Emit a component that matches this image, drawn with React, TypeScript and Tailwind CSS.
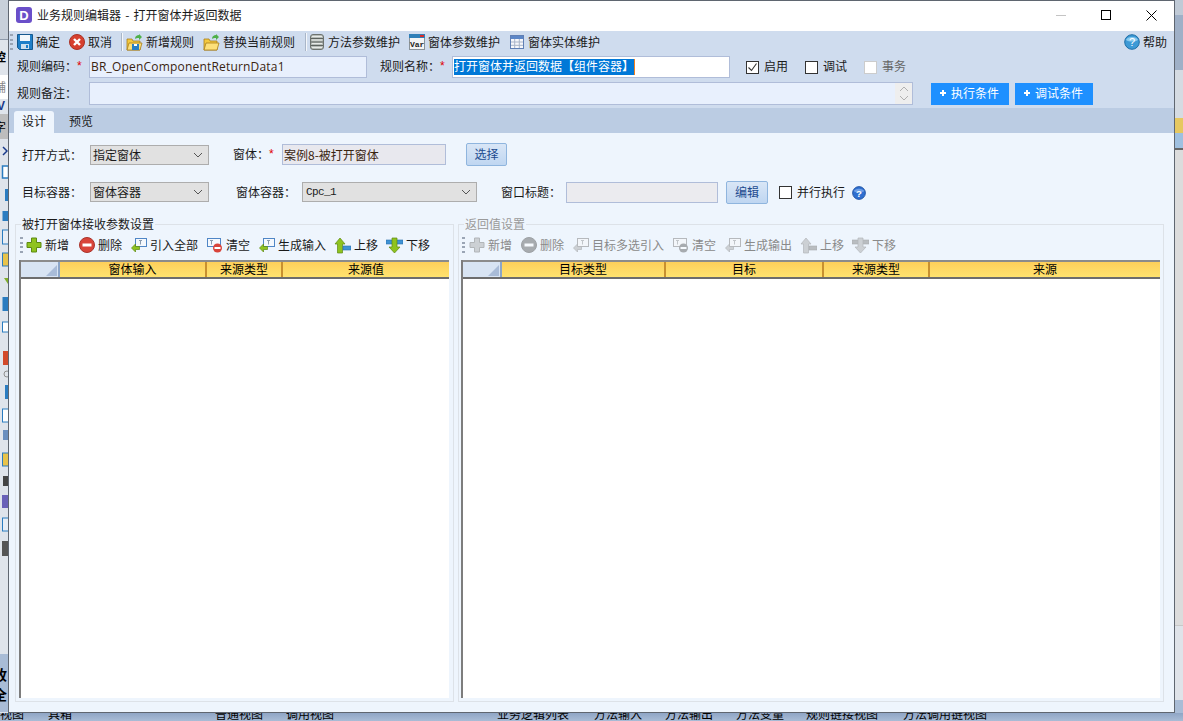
import type { ReactNode } from 'react';

const FONT = 'font-["Noto_Sans_CJK_SC","Liberation_Sans",sans-serif]';

type IconProps = { className?: string };

function SaveIcon() {
  return (
    <svg width="16" height="16" viewBox="0 0 16 16">
      <path d="M0.5 0.5h15v15h-13l-2-2z" fill="#1f7fc8" stroke="#15598f" />
      <rect x="3" y="1" width="10" height="6" fill="#f2f7fb" />
      <rect x="4" y="10" width="8" height="5" fill="#cfe0ee" />
      <rect x="9" y="11" width="2" height="3" fill="#1f7fc8" />
    </svg>
  );
}

function CancelIcon() {
  return (
    <svg width="16" height="16" viewBox="0 0 16 16">
      <circle cx="8" cy="8" r="7.5" fill="#d6402f" stroke="#a93226" />
      <path d="M5 5l6 6M11 5l-6 6" stroke="#fff" strokeWidth="2.4" />
    </svg>
  );
}

function FolderIcon({ blue }: { blue?: boolean }) {
  return (
    <svg width="17" height="17" viewBox="0 0 17 17">
      <path d="M1 5h5l1 2h7v9H1z" fill="#f4c93f" stroke="#a87f1a" strokeWidth="0.8" />
      <path d="M1 16l2-7h13l-2 7z" fill="#fde07a" stroke="#a87f1a" strokeWidth="0.8" />
      <path d="M9 5c0-3 2-4 4-4v-1l3 3-3 3v-2c-2 0-3 0-4 1z" fill="#4fb04a" />
      {blue && <rect x="6" y="10" width="7" height="6" fill="#2a7fc4" />}
      {blue && <rect x="8" y="10" width="3" height="2" fill="#fff" />}
    </svg>
  );
}

function DbIcon() {
  return (
    <svg width="14" height="16" viewBox="0 0 14 16">
      <rect x="0.5" y="0.5" width="13" height="15" rx="2.5" fill="#b6bcb8" stroke="#6d736f" />
      <path d="M1 4.5h12M1 8h12M1 11.5h12" stroke="#5d635f" />
      <path d="M2 2.5h10M2 6h10M2 9.5h10M2 13.5h10" stroke="#e8ebe8" />
    </svg>
  );
}

function VarIcon() {
  return (
    <svg width="16" height="16" viewBox="0 0 16 16">
      <rect x="0.5" y="0.5" width="15" height="15" fill="#f3f4f4" stroke="#8a939a" />
      <rect x="0" y="0" width="16" height="4" fill="#2f7fb8" />
      <rect x="11" y="1" width="4" height="2" fill="#d92a2a" />
      <text x="1" y="13" fontSize="8" fontFamily="Liberation Mono, monospace" fontWeight="700" fill="#222">Var</text>
    </svg>
  );
}

function TableIcon() {
  return (
    <svg width="14" height="14" viewBox="0 0 14 14">
      <rect x="0.5" y="0.5" width="13" height="13" fill="#f6f7fb" stroke="#5f7fb5" />
      <rect x="1" y="1" width="12" height="3" fill="#5b86c7" />
      <path d="M1 7h12M1 10.3h12M4.7 4v9M9.3 4v9" stroke="#a9b4c9" />
    </svg>
  );
}

function HelpIcon({ size = 16, dark }: { size?: number; dark?: boolean }) {
  return (
    <svg width={size} height={size} viewBox="0 0 16 16">
      <circle cx="8" cy="8" r="7.3" fill={dark ? '#2f6fd0' : '#3d9ad6'} stroke={dark ? '#1c4fa0' : '#1e6ea6'} />
      <path d="M2 6c1-4 11-4 12 0-3 2-9 2-12 0z" fill={dark ? '#6f9fe6' : '#8ccbef'} />
      <text x="8" y="12" textAnchor="middle" fontSize="11" fontFamily="Liberation Sans, sans-serif" fontWeight={dark ? 700 : 400} fill="#fff">?</text>
    </svg>
  );
}

function PlusIcon({ className }: IconProps) {
  return (
    <svg className={className} width="16" height="16" viewBox="0 0 16 16">
      <path d="M5.5 1h5v4.500H15v5h-4.500V15h-5v-4.500H1v-5h4.500z" fill="#8fc31f" stroke="#5d8a12" />
    </svg>
  );
}

function MinusIcon({ className }: IconProps) {
  return (
    <svg className={className} width="16" height="16" viewBox="0 0 16 16">
      <circle cx="8" cy="8" r="7.5" fill="#d9443a" stroke="#a9342c" />
      <rect x="3.500" y="6.500" width="9" height="3" fill="#fff" />
    </svg>
  );
}

function ImportIcon({ className }: IconProps) {
  return (
    <svg className={className} width="16" height="16" viewBox="0 0 16 16">
      <rect x="4.500" y="1.500" width="11" height="8" fill="#f4f8fd" stroke="#4f86c6" />
      <path d="M8 3.500h3M9.500 3.500v4" stroke="#8a9aad" />
      <path d="M0.500 11l4-4v2.500h4v3h-4V15z" fill="#8fc31f" stroke="#5d8a12" strokeWidth="0.7" />
    </svg>
  );
}

function ClearIcon({ className }: IconProps) {
  return (
    <svg className={className} width="16" height="16" viewBox="0 0 16 16">
      <rect x="0.500" y="1.500" width="13" height="8" fill="#f4f8fd" stroke="#4f86c6" />
      <path d="M3 3.500h3M4.500 3.500v4" stroke="#8a9aad" />
      <circle cx="10.500" cy="11" r="4.500" fill="#d9443a" />
      <rect x="7.500" y="10" width="6" height="2" fill="#fff" />
    </svg>
  );
}

function UpIcon({ className }: IconProps) {
  return (
    <svg className={className} width="17" height="17" viewBox="0 0 17 17">
      <path d="M5 1l5 6H7.500v9h-5V7H0z" transform="translate(1 0)" fill="#8fc31f" stroke="#5d8a12" strokeWidth="0.7" />
      <rect x="9" y="9" width="8" height="4" fill="#3f93d6" stroke="#2a6ea8" strokeWidth="0.6" />
    </svg>
  );
}

function DownIcon({ className }: IconProps) {
  return (
    <svg className={className} width="17" height="17" viewBox="0 0 17 17">
      <rect x="0" y="3" width="17" height="4" fill="#3f93d6" stroke="#2a6ea8" strokeWidth="0.6" />
      <path d="M6 1h5v9h3l-5.500 6L3 10h3z" fill="#8fc31f" stroke="#5d8a12" strokeWidth="0.7" />
    </svg>
  );
}

function Chevron({ className }: IconProps) {
  return (
    <svg className={className} width="10" height="6" viewBox="0 0 10 6">
      <path d="M1 1l4 4 4-4" fill="none" stroke="#555" />
    </svg>
  );
}

function Check({ checked, disabled }: { checked?: boolean; disabled?: boolean }) {
  return (
    <span
      className={`flex h-[13px] w-[13px] shrink-0 items-center justify-center border bg-white ${
        disabled ? 'border-[#cccccc]' : 'border-[#333333]'
      }`}
    >
      {checked && (
        <svg width="11" height="11" viewBox="0 0 11 11">
          <path d="M1.500 5.500l3 3 5-7" fill="none" stroke="#333" strokeWidth="1.100" />
        </svg>
      )}
    </span>
  );
}

function Sep() {
  return <span className="block h-[18px] w-[2px] shrink-0 border-l border-r border-l-[#a9b6c8] border-r-[#f4f7fb]" />;
}

function Grip() {
  return (
    <span className="flex h-[16px] w-[3px] shrink-0 flex-col justify-between">
      <i className="block h-[2px] bg-[#9aa5b5]" />
      <i className="block h-[2px] bg-[#9aa5b5]" />
      <i className="block h-[2px] bg-[#9aa5b5]" />
      <i className="block h-[2px] bg-[#9aa5b5]" />
    </span>
  );
}

function TopItem({ icon, label, className }: { icon: ReactNode; label: string; className?: string }) {
  return (
    <span className={`flex items-center gap-[3px] ${className ?? ''}`}>
      {icon}
      <span className="mb-[1px]">{label}</span>
    </span>
  );
}

function Star() {
  return <span className="font-['Liberation_Sans'] text-[#e00000]">*</span>;
}

function Select({ value, className, mono }: { value: string; className: string; mono?: boolean }) {
  return (
    <div className={`flex h-[20px] items-center justify-between border border-[#adadad] bg-[#e1e1e1] pl-[2px] pr-[5px] ${className}`}>
      <span className={mono ? "pl-[1px] font-['Liberation_Mono'] text-[11px] tracking-[-0.6px]" : ''}>{value}</span>
      <Chevron />
    </div>
  );
}

function SoftButton({ label, className }: { label: string; className: string }) {
  return (
    <div className={`flex items-center justify-center rounded-[2px] border border-[#8fb5de] bg-gradient-to-b from-[#d9e6f6] to-[#bfd6f1] pb-[2px] text-[#1d4b8f] ${className}`}>
      {label}
    </div>
  );
}

function BlueButton({ label, className }: { label: string; className: string }) {
  return (
    <div className={`flex h-[22px] w-[78px] items-center justify-center gap-[5px] bg-[#1e90ff] pb-[1px] pr-[1px] text-white ${className}`}>
      <svg width="6" height="6" viewBox="0 0 6 6">
        <path d="M3 0v6M0 3h6" stroke="#fff" strokeWidth="2" />
      </svg>
      <span>{label}</span>
    </div>
  );
}

type Col = { label: string; width: string };

function GridHeader({ cols }: { cols: Col[] }) {
  return (
    <div className="flex h-[19px] shrink-0 border-y-2 border-t-[#8b8b8b] border-b-[#6d6d6d]">
      <div className="flex w-[39px] shrink-0 items-end justify-end border-r-2 border-r-[#8ba5c8] bg-[#d8e4f3] p-[1px]">
        <svg width="11" height="11" viewBox="0 0 11 11">
          <path d="M11 0v11H0z" fill="#a9bcd8" />
        </svg>
      </div>
      {cols.map((c) => (
        <div
          key={c.label}
          className={`flex items-center justify-center border-r-2 border-r-[#c8902f] bg-gradient-to-b from-[#fdcf5a] to-[#ffe36f] pb-[1px] text-black last:border-r-0 ${c.width}`}
        >
          {c.label}
        </div>
      ))}
    </div>
  );
}

function GroupTool({ icon, label, className }: { icon: ReactNode; label: string; className?: string }) {
  return (
    <span className={`flex items-center gap-[3px] ${className ?? ''}`}>
      {icon}
      <span className="mb-[1px]">{label}</span>
    </span>
  );
}

const LEFT_COLS: Col[] = [
  { label: '窗体输入', width: 'w-[147px]' },
  { label: '来源类型', width: 'w-[76px]' },
  { label: '来源值', width: 'w-[166px]' },
];

const RIGHT_COLS: Col[] = [
  { label: '目标类型', width: 'w-[164px]' },
  { label: '目标', width: 'w-[158px]' },
  { label: '来源类型', width: 'w-[106px]' },
  { label: '来源', width: 'w-[230px]' },
];

const OFF = 'grayscale opacity-50';

function LeftStrip() {
  return (
    <div className="flex h-[713px] w-[8px] shrink-0 flex-col overflow-hidden bg-[#dfe4eb] text-[12px] text-black">
      {/* The top 140px of what shows of the window behind */}
      <div className="h-[40px] shrink-0 border-b border-b-[#8f9bab] bg-[#c8d0da]" />
      <div className="-ml-[6px] mt-[9px] h-[16px] shrink-0 font-bold leading-[16px]">控</div>
      <div className="mt-[10px] h-[24px] shrink-0 bg-white pl-0 leading-[24px] text-[#888888]">
        <span className="-ml-[6px] block">辅</span>
      </div>
      <div className="-ml-[3px] h-[15px] shrink-0 font-['Liberation_Sans'] font-bold leading-[15px] text-[#1a3a8a]">V</div>
      <div className="h-[25px] shrink-0 bg-[#bdbdbd] leading-[25px]">
        <span className="-ml-[6px] block">字</span>
      </div>
      <svg className="block shrink-0" width="8" height="420" viewBox="0 140 8 420">
        <path d="M3 148l4 4-4 4" fill="none" stroke="#1a3a8a" strokeWidth="1.500" />
        <rect x="2.500" y="167" width="6" height="12" fill="#fff" stroke="#2b7cc0" strokeWidth="1.500" />
        <rect x="5" y="190" width="3" height="12" fill="#2b7cc0" />
        <rect x="2.500" y="212" width="6" height="10" fill="#2b7cc0" />
        <rect x="2.500" y="231" width="6" height="14" fill="#e7edf5" stroke="#2b7cc0" />
        <rect x="2.500" y="254" width="6" height="13" fill="#e8c34a" stroke="#2b7cc0" />
        <path d="M4 279l4 6v-6z" fill="#7fae2a" />
        <rect x="2.500" y="298" width="6" height="14" fill="#2b7cc0" />
        <rect x="2.500" y="323" width="6" height="10" fill="#fff" stroke="#2b7cc0" />
        <rect x="3" y="352" width="5" height="14" fill="#d2492a" />
        <circle cx="7" cy="375" r="3" fill="none" stroke="#8f8f8f" />
        <rect x="5" y="386" width="3" height="14" fill="#2b7cc0" />
        <rect x="2.500" y="410" width="6" height="13" fill="#fff" stroke="#2b7cc0" />
        <rect x="3" y="431" width="5" height="10" fill="#6a8fbf" />
        <rect x="2.500" y="454" width="6" height="13" fill="#e8c34a" stroke="#2b7cc0" />
        <rect x="3" y="477" width="5" height="10" fill="#444" />
        <rect x="2" y="496" width="6" height="13" fill="#6a62b8" />
        <rect x="2.500" y="519" width="6" height="13" fill="#e7edf5" stroke="#2b7cc0" />
        <rect x="2" y="542" width="6" height="15" fill="#555" />
      </svg>
      <div className="mt-[95px] flex h-[58px] shrink-0 flex-col bg-[#a9bcd6] pt-[10px] text-[14px] font-bold">
        <span className="-ml-[7px] block h-[20px] leading-[20px]">收</span>
        <span className="-ml-[7px] block h-[20px] leading-[20px]">全</span>
      </div>
    </div>
  );
}

function RightStrip() {
  return (
    <div className="flex h-[713px] w-[8px] shrink-0 flex-col bg-[#dcdcdc]">
      <div className="h-[15px] shrink-0 bg-[#c0cad6]" />
      <div className="h-[55px] shrink-0 bg-[#9fb0c7]" />
      <div className="h-[48px] shrink-0 bg-[#d5dbe2]" />
      <div className="h-[15px] shrink-0 bg-[#e6c860]" />
      <div className="h-[17px] shrink-0 border-b-2 border-b-[#666666] bg-[#9fc0e0]" />
      <div className="h-[475px] shrink-0 bg-[#dcdcdc]" />
      <div className="h-[75px] shrink-0 border-t border-t-[#c8c8c8] bg-[#dfe3e9]" />
      <div className="flex-1 bg-[#a9bcd6]" />
    </div>
  );
}

export default function App() {
  return (
    <div className={`h-[721px] w-[1183px] overflow-hidden bg-[#a9bcd6] text-[12px] leading-none text-[#1a1a1a] ${FONT}`}>
      <div className="flex">
        <LeftStrip />

        {/* Dialog window */}
        <div className="flex h-[713px] w-[1167px] shrink-0 flex-col border border-[#5f6670] bg-[#eef5fd]">
          {/* Title bar */}
          <div className="flex h-[30px] shrink-0 items-center bg-white pb-[2px] pl-[7px]">
            <span className="flex h-[16px] w-[16px] items-center justify-center rounded-[3px] bg-[#6a4fc9] font-['Liberation_Sans'] text-[13px] font-bold text-white">
              D
            </span>
            <span className="ml-[5px] [word-spacing:1.5px]">业务规则编辑器 - 打开窗体并返回数据</span>
            <span className="ml-auto h-[1px] w-[10px] bg-[#c4c4c4]" />
            <span className="ml-[35px] h-[10px] w-[10px] border border-black" />
            <svg className="ml-[35px] mr-[17px]" width="11" height="11" viewBox="0 0 11 11">
              <path d="M0.500 0.500l10 10M10.500 0.500l-10 10" stroke="#000" />
            </svg>
          </div>

          {/* Main toolbar */}
          <div className="flex h-[22px] shrink-0 items-center bg-[#cfdcee] pl-[1px] pr-[7px]">
            <Grip />
            <TopItem className="ml-[4px]" icon={<SaveIcon />} label="确定" />
            <TopItem className="ml-[9px]" icon={<CancelIcon />} label="取消" />
            <span className="ml-[9px]"><Sep /></span>
            <TopItem className="ml-[3px]" icon={<FolderIcon blue />} label="新增规则" />
            <TopItem className="ml-[9px]" icon={<FolderIcon />} label="替换当前规则" />
            <span className="ml-[10px]"><Sep /></span>
            <TopItem className="ml-[3px] gap-[4px]" icon={<DbIcon />} label="方法参数维护" />
            <TopItem className="ml-[9px]" icon={<VarIcon />} label="窗体参数维护" />
            <TopItem className="ml-[10px] gap-[4px]" icon={<TableIcon />} label="窗体实体维护" />
            <TopItem className="ml-auto" icon={<HelpIcon />} label="帮助" />
          </div>

          {/* Rule code / name */}
          <div className="flex h-[55px] shrink-0 flex-col bg-[#cfdcee]">
            <div className="mt-[3px] flex h-[22px] items-center pl-[8px]">
              <div className="mb-[2px] flex w-[72px] shrink-0 items-center">
                <span>规则编码：</span>
                <Star />
              </div>
              <div className="flex h-[22px] w-[278px] items-center border border-[#b0bdd9] bg-[#e8f0fd] pb-[1px] pl-[1px] font-['Open_Sans'] tracking-[0.19px] text-[#3a2410]">
                BR_OpenComponentReturnData1
              </div>
              <div className="mb-[2px] ml-[13px] flex w-[72px] shrink-0 items-center">
                <span>规则名称：</span>
                <Star />
              </div>
              <div className="flex h-[22px] w-[278px] items-center border border-[#b0bdd9] bg-white pl-[1px]">
                <span className="border-r border-r-[#f08020] bg-[#0078d7] pb-[3px] pt-[1px] text-white">打开窗体并返回数据【组件容器】</span>
              </div>
              <span className="ml-[16px] flex items-center gap-[5px]"><Check checked /><span className="mb-[2px]">启用</span></span>
              <span className="ml-[17px] flex items-center gap-[5px]"><Check /><span className="mb-[2px]">调试</span></span>
              <span className="ml-[17px] flex items-center gap-[5px] text-[#666666]"><Check disabled /><span className="mb-[2px]">事务</span></span>
            </div>

            <div className="mt-[4px] flex h-[23px] items-center pl-[8px]">
              <span className="mb-[2px] w-[72px] shrink-0">规则备注：</span>
              <div className="flex h-[23px] w-[824px] justify-end border border-[#b0bdd9] bg-[#e8f0fd]">
                <div className="flex w-[17px] flex-col items-center justify-center gap-[3px] bg-[#eeeeee]">
                  <Chevron className="rotate-180 opacity-40" />
                  <Chevron className="opacity-40" />
                </div>
              </div>
              <BlueButton className="ml-[18px]" label="执行条件" />
              <BlueButton className="ml-[6px]" label="调试条件" />
            </div>
          </div>

          {/* Tabs */}
          <div className="flex h-[25px] shrink-0 items-end bg-[#bbcce3] pl-[5px]">
            <div className="flex h-[22px] w-[40px] items-center justify-center rounded-t-[3px] bg-[#eef5fd] pb-[3px]">设计</div>
            <div className="flex h-[22px] w-[52px] items-center justify-center pb-[3px] pl-[2px]">预览</div>
          </div>

          {/* Design page */}
          <div className="flex min-h-0 flex-1 flex-col pl-[13px]">
            <div className="mt-[10px] flex h-[23px] shrink-0 items-center">
              <span className="w-[68px] shrink-0">打开方式：</span>
              <Select className="w-[119px]" value="指定窗体" />
              <span className="mb-[1px] ml-[24px] flex w-[49px] shrink-0 items-center">窗体：<Star /></span>
              <div className="flex h-[21px] w-[164px] items-center border border-[#b0bdd9] bg-[#e8e8ee] pl-[1px] text-[#3a2410]">案例8-被打开窗体</div>
              <SoftButton className="ml-[20px] h-[23px] w-[41px]" label="选择" />
            </div>

            <div className="mt-[15px] flex h-[23px] shrink-0 items-center">
              <span className="mb-[1px] w-[68px] shrink-0">目标容器：</span>
              <Select className="mb-[1px] w-[119px]" value="窗体容器" />
              <span className="mb-[1px] ml-[27px] w-[66px] shrink-0">窗体容器：</span>
              <Select className="mb-[1px] w-[175px]" mono value="Cpc_1" />
              <span className="mb-[1px] ml-[24px] w-[65px] shrink-0">窗口标题：</span>
              <div className="h-[21px] w-[152px] border border-[#b0bdd9] bg-[#ebebef]" />
              <SoftButton className="ml-[8px] h-[23px] w-[42px]" label="编辑" />
              <span className="ml-[11px] flex items-center gap-[5px]"><Check /><span className="mb-[2px]">并行执行</span></span>
              <span className="ml-[7px]"><HelpIcon size={14} dark /></span>
            </div>

            <div className="mt-[20px] flex h-[478px] shrink-0 gap-[4px]">
              {/* Receive-parameter group */}
              <div className="-ml-[7px] flex w-[439px] shrink-0 flex-col border border-[#dde2e8] pb-[3px] pl-[3px] pr-[4px]">
                <span className="-mt-[9px] ml-[2px] h-[15px] w-fit bg-[#eef5fd] px-[1px] leading-[15px]">被打开窗体接收参数设置</span>
                <div className="flex h-[29px] shrink-0 items-center pb-[1px] pl-[1px]">
                  <Grip />
                  <GroupTool className="ml-[3px]" icon={<PlusIcon />} label="新增" />
                  <GroupTool className="ml-[10px]" icon={<MinusIcon />} label="删除" />
                  <GroupTool className="ml-[9px]" icon={<ImportIcon />} label="引入全部" />
                  <GroupTool className="ml-[9px]" icon={<ClearIcon />} label="清空" />
                  <GroupTool className="ml-[9px]" icon={<ImportIcon />} label="生成输入" />
                  <GroupTool className="ml-[8px]" icon={<UpIcon />} label="上移" />
                  <GroupTool className="ml-[8px]" icon={<DownIcon />} label="下移" />
                </div>
                <div className="flex min-h-0 flex-1 flex-col border-l-2 border-l-[#7d7d7d] bg-white">
                  <GridHeader cols={LEFT_COLS} />
                </div>
              </div>

              {/* Return-value group, disabled */}
              <div className="flex w-[706px] shrink-0 flex-col border border-[#dde2e8] pb-[3px] pl-[2px] pr-[3px]">
                <span className="-mt-[9px] ml-[3px] h-[15px] w-fit bg-[#eef5fd] px-[1px] leading-[15px] text-[#9a9a9a]">返回值设置</span>
                <div className="flex h-[29px] shrink-0 items-center pb-[1px] pl-[1px] text-[#8a8a8a]">
                  <Grip />
                  <GroupTool className="ml-[4px]" icon={<PlusIcon className={OFF} />} label="新增" />
                  <GroupTool className="ml-[9px]" icon={<MinusIcon className={OFF} />} label="删除" />
                  <GroupTool className="ml-[9px]" icon={<ImportIcon className={OFF} />} label="目标多选引入" />
                  <GroupTool className="ml-[9px]" icon={<ClearIcon className={OFF} />} label="清空" />
                  <GroupTool className="ml-[9px]" icon={<ImportIcon className={OFF} />} label="生成输出" />
                  <GroupTool className="ml-[8px]" icon={<UpIcon className={OFF} />} label="上移" />
                  <GroupTool className="ml-[8px]" icon={<DownIcon className={OFF} />} label="下移" />
                </div>
                <div className="flex min-h-0 flex-1 flex-col border-l-2 border-l-[#7d7d7d] bg-white">
                  <GridHeader cols={RIGHT_COLS} />
                </div>
              </div>
            </div>
          </div>
        </div>

        <RightStrip />
      </div>

      {/* Window behind, bottom edge */}
      <div className="flex h-[8px] items-start overflow-hidden bg-gradient-to-b from-[#8fa5c5] to-[#a9bcd6] text-[12px] leading-[12px] text-black">
        <span className="-mt-[5px] w-[36px] shrink-0">视图</span>
        <span className="-mt-[5px] ml-[12px] w-[30px] shrink-0">具箱</span>
        <span className="-mt-[5px] ml-[137px] w-[48px] shrink-0">普通视图</span>
        <span className="-mt-[5px] ml-[23px] w-[48px] shrink-0">调用视图</span>
        <span className="-mt-[5px] ml-[163px] w-[72px] shrink-0">业务逻辑列表</span>
        <span className="-mt-[5px] ml-[25px] w-[48px] shrink-0">方法输入</span>
        <span className="-mt-[5px] ml-[23px] w-[48px] shrink-0">方法输出</span>
        <span className="-mt-[5px] ml-[23px] w-[48px] shrink-0">方法变量</span>
        <span className="-mt-[5px] ml-[22px] w-[72px] shrink-0">规则链接视图</span>
        <span className="-mt-[5px] ml-[25px] w-[84px] shrink-0">方法调用链视图</span>
      </div>
    </div>
  );
}
